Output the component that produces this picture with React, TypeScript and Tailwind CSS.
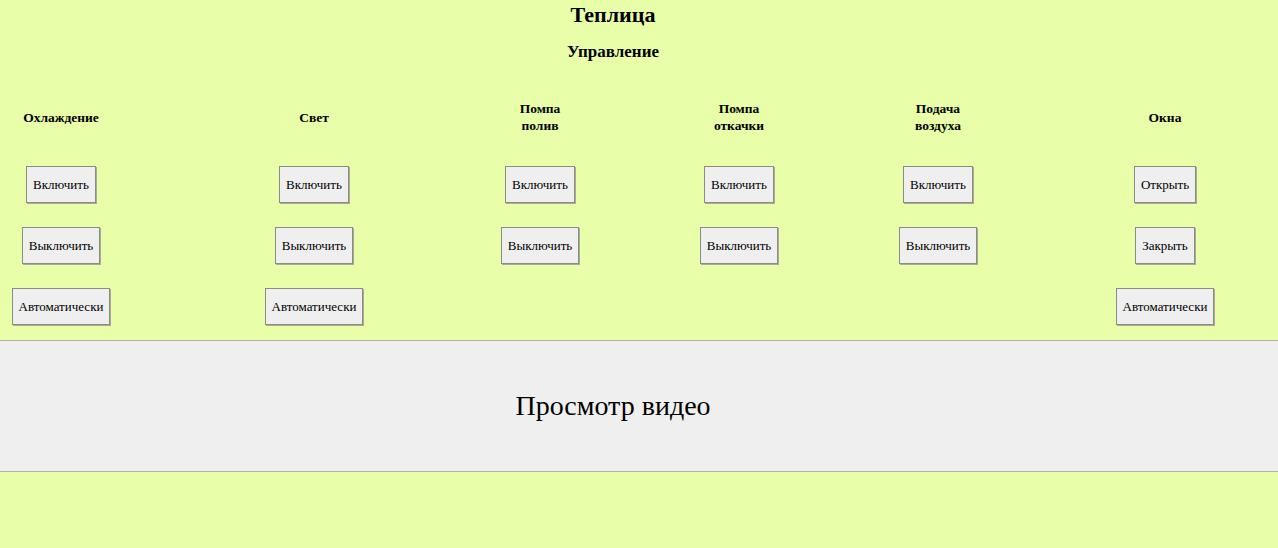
import React from "react";

type Col = { title: string[]; buttons: string[]; cls: string };

const cols: Col[] = [
  { title: ["Охлаждение"], buttons: ["Включить", "Выключить", "Автоматически"], cls: "w-[122px]" },
  { title: ["Свет"], buttons: ["Включить", "Выключить", "Автоматически"], cls: "ml-[82px] w-[220px]" },
  { title: ["Помпа", "полив"], buttons: ["Включить", "Выключить"], cls: "ml-[16px] w-[200px]" },
  { title: ["Помпа", "откачки"], buttons: ["Включить", "Выключить"], cls: "w-[198px]" },
  { title: ["Подача", "воздуха"], buttons: ["Включить", "Выключить"], cls: "w-[200px]" },
  { title: ["Окна"], buttons: ["Открыть", "Закрыть", "Автоматически"], cls: "ml-[66px] w-[122px]" },
];

export default function App() {
  return (
    <div
      className="min-h-[548px] w-full bg-[#e8fea8] text-black"
      style={{ fontFamily: '"Liberation Serif", "Times New Roman", serif' }}
    >
      <div className="w-[1226px]">
        <h1 className="pt-[3px] text-center text-[22px] font-bold leading-[24px]">Теплица</h1>
        <h2 className="mt-[15px] text-center text-[17px] font-bold leading-[20px]">Управление</h2>
        <div className="mt-[38px] flex">
          {cols.map((c, i) => (
            <div key={i} className={`${c.cls} flex flex-col items-center`}>
              <div className="flex h-[34px] flex-col items-center justify-center text-center text-[13.5px] font-bold leading-[17px]">
                {c.title.map((t) => (
                  <span key={t}>{t}</span>
                ))}
              </div>
              <div className="mt-[32px] flex flex-col items-center gap-[24px]">
                {c.buttons.map((b) => (
                  <button
                    key={b}
                    className="h-[37px] whitespace-nowrap border border-[#8c8c80] bg-[#efefef] px-[6px] text-[13px] leading-[15px] shadow-[1px_1px_0_#a9aa98]"
                    style={{ fontFamily: '"Liberation Serif", "Times New Roman", serif' }}
                  >
                    {b}
                  </button>
                ))}
              </div>
            </div>
          ))}
        </div>
      </div>
      <div className="mt-[15px] flex h-[132px] items-center border-y border-[#b2b2a8] bg-[#efefef]">
        <div className="w-[1226px] text-center text-[28px] leading-[32px]">Просмотр видео</div>
      </div>
    </div>
  );
}
